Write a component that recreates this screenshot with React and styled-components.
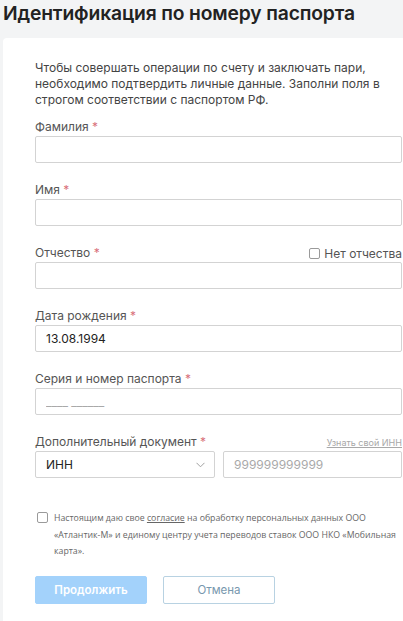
import React, { useState } from "react";
import styled, { createGlobalStyle } from "styled-components";

const GlobalStyle = createGlobalStyle`
  html, body {
    margin: 0;
    padding: 0;
    background: #f3f4f5;
    overflow: hidden;
  }
  body {
    font-family: Inter, "Noto Sans", sans-serif;
    color: #333;
  }
  * {
    box-sizing: border-box;
  }
`;

const Page = styled.div`
  padding: 0 0 0 3px;
  width: 460px;
`;

const Title = styled.h1`
  margin: 0;
  padding-top: 1px;
  font-size: 19.3px;
  line-height: 24px;
  font-weight: 600;
  color: #222;
  letter-spacing: -0.15px;
`;

const Card = styled.div`
  margin-top: 13px;
  background: #fff;
  border-radius: 4px;
  padding: 22px 0 60px 32px;
  min-height: 620px;
`;

const Column = styled.div`
  width: 367px;
`;

const Intro = styled.p`
  margin: 0 0 11px;
  font-size: 12px;
  line-height: 16px;
  color: #444;
`;

const Field = styled.div`
  margin-bottom: 19px;
`;

const LabelRow = styled.div`
  display: flex;
  justify-content: space-between;
  align-items: center;
  height: 16px;
  margin-bottom: 1px;
`;

const Label = styled.label`
  font-size: 12px;
  line-height: 16px;
  color: #555;
`;

const Star = styled.span`
  color: #d9707a;
`;

const Input = styled.input`
  display: block;
  width: 100%;
  height: 27px;
  border: 1px solid #d3d3d3;
  border-radius: 2px;
  padding: 0 10px;
  font-family: inherit;
  font-size: 12px;
  color: #222;
  background: #fff;
  outline: none;

  &::placeholder {
    color: #a9a9a9;
  }
`;

const CheckLabel = styled.label`
  display: flex;
  align-items: center;
  gap: 4px;
  font-size: 12px;
  color: #555;
`;

const Box = styled.span`
  display: inline-block;
  width: 11px;
  height: 11px;
  border: 1px solid #9a9a9a;
  border-radius: 2px;
  background: #fff;
  flex-shrink: 0;
`;

const HintLink = styled.a`
  font-size: 9px;
  color: #a8a8a8;
  text-decoration: underline;
`;

const DocRow = styled.div`
  display: grid;
  grid-template-columns: 180px 1fr;
  gap: 8px;
`;

const Select = styled.div`
  display: flex;
  align-items: center;
  justify-content: space-between;
  height: 27px;
  border: 1px solid #d3d3d3;
  border-radius: 2px;
  padding: 0 9px 0 10px;
  font-size: 12px;
  color: #222;
`;

const Consent = styled.div`
  display: flex;
  align-items: flex-start;
  gap: 6px;
  margin-top: 34px;
  padding-left: 2px;
`;

const ConsentText = styled.p`
  margin: 0;
  margin-top: -2px;
  font-family: "Open Sans", sans-serif;
  font-size: 8.75px;
  line-height: 16.5px;
  color: #666;
`;

const Underlined = styled.span`
  text-decoration: underline;
`;

const Buttons = styled.div`
  display: flex;
  gap: 16px;
  margin-top: 16px;
`;

const Button = styled.button`
  width: 112px;
  height: 28px;
  border-radius: 2px;
  font-family: inherit;
  font-size: 11.5px;
  cursor: pointer;
  border: 1px solid ${(p) => (p.$primary ? "#a3d2fb" : "#b8d2e2")};
  background: ${(p) => (p.$primary ? "#a3d2fb" : "#fff")};
  color: ${(p) => (p.$primary ? "#fff" : "#7898ae")};
  font-weight: ${(p) => (p.$primary ? 600 : 400)};
`;

function Chevron() {
  return (
    <svg width="9" height="6" viewBox="0 0 9 6" fill="none">
      <path d="M0.5 0.8 L4.5 4.8 L8.5 0.8" stroke="#a0a0a0" strokeWidth="1" />
    </svg>
  );
}

function TextField({ label, extra, ...rest }) {
  return (
    <Field>
      <LabelRow>
        <Label>
          {label} <Star>*</Star>
        </Label>
        {extra}
      </LabelRow>
      <Input {...rest} />
    </Field>
  );
}

export default function App() {
  const [form, setForm] = useState({
    last: "",
    first: "",
    middle: "",
    birth: "13.08.1994",
    passport: "",
    inn: "",
  });
  const set = (k) => (e) => setForm({ ...form, [k]: e.target.value });

  return (
    <Page>
      <GlobalStyle />
      <Title>Идентификация по номеру паспорта</Title>
      <Card>
        <Column>
          <Intro>
            Чтобы совершать операции по счету и заключать пари, необходимо
            подтвердить личные данные. Заполни поля в строгом соответствии с
            паспортом РФ.
          </Intro>
          <TextField label="Фамилия" value={form.last} onChange={set("last")} />
          <TextField label="Имя" value={form.first} onChange={set("first")} />
          <TextField
            label="Отчество"
            value={form.middle}
            onChange={set("middle")}
            extra={
              <CheckLabel>
                <Box /> Нет отчества
              </CheckLabel>
            }
          />
          <TextField
            label="Дата рождения"
            value={form.birth}
            onChange={set("birth")}
          />
          <TextField
            label="Серия и номер паспорта"
            placeholder="____ ______"
            value={form.passport}
            onChange={set("passport")}
          />
          <Field>
            <LabelRow>
              <Label>
                Дополнительный документ <Star>*</Star>
              </Label>
              <HintLink>Узнать свой ИНН</HintLink>
            </LabelRow>
            <DocRow>
              <Select>
                ИНН
                <Chevron />
              </Select>
              <Input
                placeholder="999999999999"
                value={form.inn}
                onChange={set("inn")}
              />
            </DocRow>
          </Field>
          <Consent>
            <Box />
            <ConsentText>
              Настоящим даю свое <Underlined>согласие</Underlined> на обработку
              персональных данных ООО «Атлантик-М» и единому центру учета
              переводов ставок ООО НКО «Мобильная карта».
            </ConsentText>
          </Consent>
          <Buttons>
            <Button $primary>Продолжить</Button>
            <Button>Отмена</Button>
          </Buttons>
        </Column>
      </Card>
    </Page>
  );
}
